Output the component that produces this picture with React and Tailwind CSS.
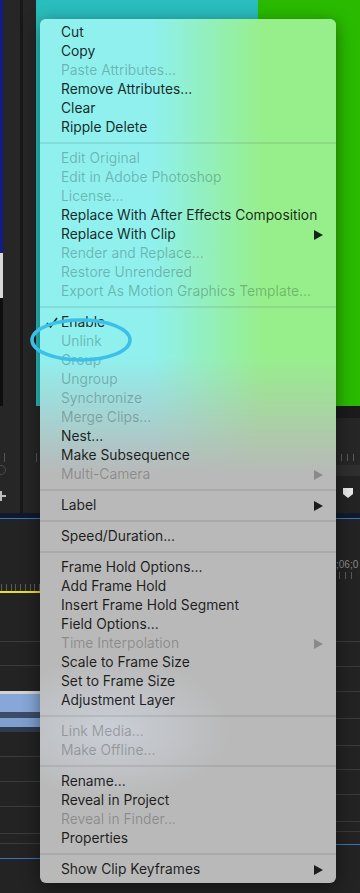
import React from 'react'

const groups = [
  [
    { t: 'Cut' },
    { t: 'Copy' },
    { t: 'Paste Attributes...', d: true },
    { t: 'Remove Attributes...' },
    { t: 'Clear' },
    { t: 'Ripple Delete' },
  ],
  [
    { t: 'Edit Original', d: true },
    { t: 'Edit in Adobe Photoshop', d: true },
    { t: 'License...', d: true },
    { t: 'Replace With After Effects Composition' },
    { t: 'Replace With Clip', sub: true },
    { t: 'Render and Replace...', d: true },
    { t: 'Restore Unrendered', d: true },
    { t: 'Export As Motion Graphics Template...', d: true },
  ],
  [
    { t: 'Enable', check: true },
    { t: 'Unlink', d: true },
    { t: 'Group', d: true },
    { t: 'Ungroup', d: true },
    { t: 'Synchronize', d: true },
    { t: 'Merge Clips...', d: true },
    { t: 'Nest...' },
    { t: 'Make Subsequence' },
    { t: 'Multi-Camera', d: true, sub: true },
  ],
  [{ t: 'Label', sub: true }],
  [{ t: 'Speed/Duration...' }],
  [
    { t: 'Frame Hold Options...' },
    { t: 'Add Frame Hold' },
    { t: 'Insert Frame Hold Segment' },
    { t: 'Field Options...' },
    { t: 'Time Interpolation', d: true, sub: true },
    { t: 'Scale to Frame Size' },
    { t: 'Set to Frame Size' },
    { t: 'Adjustment Layer' },
  ],
  [
    { t: 'Link Media...', d: true },
    { t: 'Make Offline...', d: true },
  ],
  [
    { t: 'Rename...' },
    { t: 'Reveal in Project' },
    { t: 'Reveal in Finder...', d: true },
    { t: 'Properties' },
  ],
  [{ t: 'Show Clip Keyframes', sub: true }],
]

function MenuRow({ item }) {
  return (
    <div
      className={`relative flex items-center h-[19px] pl-[21px] pr-[13px] ${
        item.d ? 'text-black/25' : 'text-black/85'
      }`}
    >
      {item.check && (
        <svg className="absolute left-[6px] top-[4px]" width="12" height="11" viewBox="0 0 12 11">
          <path d="M1 6 L4.5 10 L11 1" fill="none" stroke="currentColor" strokeWidth="1.6" />
        </svg>
      )}
      <span className="flex-1 whitespace-nowrap">{item.t}</span>
      {item.sub && (
        <svg width="9" height="10" viewBox="0 0 9 10">
          <polygon points="0,0 9,5 0,10" fill="currentColor" />
        </svg>
      )}
    </div>
  )
}

function ContextMenu() {
  return (
    <div className="absolute left-[40px] top-[19px] w-[296px] rounded-[6px] overflow-hidden bg-[#b9b9b9] shadow-[0_4px_18px_rgba(0,0,0,0.45)] font-['Inter','Liberation_Sans',sans-serif] text-[13.8px] leading-none">
      {/* vibrancy tint from the monitor behind */}
      <div className="absolute inset-x-0 top-0 h-[455px] bg-[linear-gradient(to_right,#8ff0ee_0%,#8ff0ee_38%,#97ef8c_75%,#97ef8c_100%)] [mask-image:linear-gradient(to_bottom,black_74%,transparent_100%)]" />
      <div className="absolute inset-0 bg-[radial-gradient(ellipse_120px_70px_at_70px_710px,rgba(215,225,240,0.55),transparent)]" />
      <div className="relative pt-[4px] pb-[4px]">
        {groups.map((g, gi) => (
          <div key={gi}>
            {gi > 0 && <div className="my-[5px] h-[2px] bg-black/[0.08]" />}
            {g.map((item) => (
              <MenuRow key={item.t} item={item} />
            ))}
          </div>
        ))}
      </div>
    </div>
  )
}

function Ticks({ n, gap, className }) {
  return (
    <div className={`flex ${className}`} style={{ gap }}>
      {Array.from({ length: n }).map((_, i) => (
        <div key={i} className="w-px h-[7px] bg-[#5a5a5a]" />
      ))}
    </div>
  )
}

export default function App() {
  return (
    <div className="relative w-[360px] h-[893px] overflow-hidden bg-[#232323]">
      {/* monitor panel */}
      <div className="flex h-[406px]">
        <div className="w-[3px] flex flex-col">
          <div className="h-[253px] bg-[#121c86]" />
          <div className="h-[45px] bg-[#d8d8d8]" />
          <div className="flex-1 bg-[#0e0e0e]" />
        </div>
        <div className="w-[17px] bg-[#262626]" />
        <div className="w-[3px] bg-[#181818]" />
        <div className="w-[13px] bg-[#262626]" />
        <div className="w-[222px] bg-[#2abdbd]" />
        <div className="flex-1 bg-[#2abb00]" />
      </div>

      {/* timeline panel */}
      <div className="flex h-[487px]">
        {/* left edge */}
        <div className="w-[40px] flex flex-col">
          <div className="relative h-[107px] flex bg-[#262626]">
            <div className="w-[20px] flex flex-col items-start pl-[4px]">
              <div className="mt-[47px] w-px h-[9px] bg-[#555]" />
              <div className="mt-[3px] -ml-[8px] w-[10px] h-[10px] rounded-full border border-[#4a4a4a]" />
              {/* plus button, cut by the panel edge */}
              <div className="relative mt-[16px] -ml-[8px] w-[10px] h-[10px]">
                <div className="absolute left-0 top-[4px] w-[10px] h-[2px] bg-[#bdbdbd]" />
                <div className="absolute left-[4px] top-0 w-[2px] h-[10px] bg-[#bdbdbd]" />
              </div>
            </div>
            <div className="w-[3px] bg-[#181818]" />
            <div className="flex-1 flex flex-col items-end pr-[3px]">
              <div className="mt-[47px] w-px h-[9px] bg-[#555]" />
            </div>
          </div>
          <div className="h-[5px] bg-[#101a2c]" />
          <div className="h-px bg-[#3a74c0]" />
          <div className="h-[65px]" />
          <Ticks n={9} gap="4px" className="pl-[1px] h-[7px]" />
          <div className="h-[2px] bg-[#e6e31c]" />
          <div className="h-[48px]" />
          <div className="h-px bg-[#3a3a3a]" />
          <div className="h-[23px]" />
          <div className="h-px bg-[#3a3a3a]" />
          <div className="h-[25px]" />
          <div className="h-[3px] bg-[#d2d2d2]" />
          <div className="h-[18px] bg-[#86a7d7]" />
          <div className="h-[6px] bg-[#3a4c66]" />
          <div className="h-[9px] bg-[#7f9fcf]" />
          <div className="h-[5px] bg-[#2f3a4c]" />
          <div className="h-[24px]" />
          <div className="h-px bg-[#3a3a3a]" />
          <div className="h-[24px]" />
          <div className="h-px bg-[#3a3a3a]" />
          <div className="h-[24px]" />
          <div className="h-px bg-[#3a3a3a]" />
          <div className="h-[26px]" />
          <div className="h-px bg-[#3a3a3a]" />
          <div className="h-[9px]" />
          <div className="h-px bg-[#3a3a3a]" />
          <div className="h-[14px]" />
          <div className="h-px bg-[#3a74c0]" />
        </div>

        <div className="flex-1" />

        {/* right edge */}
        <div className="w-[24px] flex flex-col">
          <div className="h-[12px] bg-[#1b1b1b]" />
          <div className="h-[47px] bg-[#262626] flex items-end">
            <Ticks n={3} gap="5px" className="pl-[5px] pb-[4px]" />
          </div>
          <div className="h-[11px] bg-[#2f2f2f]" />
          <div className="relative h-[37px] bg-[#232323]">
            <svg className="absolute left-[7px] top-[12px]" width="10" height="10" viewBox="0 0 10 10">
              <polygon points="0,0 10,0 10,6 5,10 0,6" fill="#e8e8e8" />
            </svg>
          </div>
          <div className="h-[5px] bg-[#101a2c]" />
          <div className="h-px bg-[#3a74c0]" />
          <div className="h-[41px]" />
          <div className="text-[10px] leading-none text-[#8a8a8a] font-['Liberation_Sans',sans-serif] whitespace-nowrap">;06;0</div>
          <Ticks n={3} gap="5px" className="pl-[3px] pt-[2px]" />
          <div className="h-[62px]" />
          <div className="h-px bg-[#3a3a3a]" />
          <div className="h-[24px]" />
          <div className="h-px bg-[#3a3a3a]" />
          <div className="h-[24px]" />
          <div className="h-px bg-[#3a3a3a]" />
          <div className="h-[26px]" />
          <div className="h-px bg-[#3a3a3a]" />
          <div className="h-[26px]" />
          <div className="h-px bg-[#3a3a3a]" />
          <div className="h-[23px]" />
          <div className="h-px bg-[#3a3a3a]" />
          <div className="h-[24px]" />
          <div className="h-px bg-[#3a3a3a]" />
          <div className="h-[26px]" />
          <div className="h-px bg-[#3a3a3a]" />
          <div className="h-[9px]" />
          <div className="h-px bg-[#3a3a3a]" />
          <div className="h-[12px]" />
          <div className="h-px bg-[#3a74c0]" />
        </div>
      </div>

      <ContextMenu />

      {/* annotation circle around Unlink */}
      <svg className="absolute left-[29px] top-[317px]" width="104" height="46" viewBox="0 0 104 46">
        <ellipse cx="52" cy="23" rx="49" ry="20" fill="none" stroke="#3cc0ea" strokeWidth="3.5" />
      </svg>
    </div>
  )
}
